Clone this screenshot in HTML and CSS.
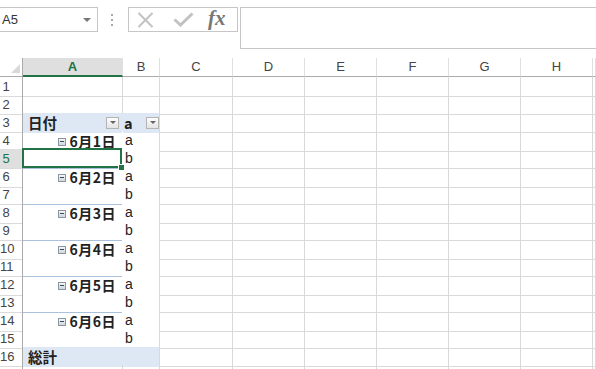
FILE: index.html
```html
<!DOCTYPE html>
<html lang="ja">
<head>
  <meta charset="UTF-8">
  <title>Pivot</title>
  <link rel="stylesheet" href="styles.css">
</head>
<body>

<!-- Formula bar -->
<div class="toolbar">
  <div class="namebox"><span>A5</span><i class="caret"></i></div>
  <div class="grip">
    <svg width="3" height="12" viewBox="0 0 3 12"><rect x="0" y="0" width="2" height="2"/><rect x="0" y="5" width="2" height="2"/><rect x="0" y="10" width="2" height="2"/></svg>
  </div>
  <div class="fbuttons">
    <svg class="ico-x" width="17" height="16" viewBox="0 0 17 16"><path d="M1.5 1 L15.5 15 M15.5 1 L1.5 15"/></svg>
    <svg class="ico-ok" width="21" height="15" viewBox="0 0 21 15"><path d="M1.5 7.5 L7.5 13 L19.5 1.5"/></svg>
    <span class="fx">fx</span>
  </div>
  <div class="finput"></div>
</div>

<!-- Sheet -->
<div class="sheet">
  <div class="row head">
    <div class="corner"><i></i></div>
    <div class="ch on">A</div><div class="ch">B</div><div class="ch">C</div><div class="ch">D</div>
    <div class="ch">E</div><div class="ch">F</div><div class="ch">G</div><div class="ch">H</div><div class="ch"></div>
  </div>

  <div class="row">
    <div class="rh">1</div><div class="c"></div><div class="c"></div>
    <div class="c"></div><div class="c"></div><div class="c"></div><div class="c"></div><div class="c"></div><div class="c"></div><div class="c"></div>
  </div>
  <div class="row">
    <div class="rh">2</div><div class="c"></div><div class="c"></div>
    <div class="c"></div><div class="c"></div><div class="c"></div><div class="c"></div><div class="c"></div><div class="c"></div><div class="c"></div>
  </div>
  <div class="row">
    <div class="rh">3</div>
    <div class="c band bold first">日付<i class="dd"></i></div>
    <div class="c band bold second">a<i class="dd"></i></div>
    <div class="c"></div><div class="c"></div><div class="c"></div><div class="c"></div><div class="c"></div><div class="c"></div><div class="c"></div>
  </div>
  <div class="row">
    <div class="rh">4</div>
    <div class="c pv date"><i class="mbox"></i>6月1日</div>
    <div class="c pvb">a</div>
    <div class="c"></div><div class="c"></div><div class="c"></div><div class="c"></div><div class="c"></div><div class="c"></div><div class="c"></div>
  </div>
  <div class="row">
    <div class="rh on">5</div>
    <div class="c pv gend sel"></div>
    <div class="c pvb">b</div>
    <div class="c"></div><div class="c"></div><div class="c"></div><div class="c"></div><div class="c"></div><div class="c"></div><div class="c"></div>
  </div>
  <div class="row">
    <div class="rh">6</div>
    <div class="c pv date"><i class="mbox"></i>6月2日</div>
    <div class="c pvb">a</div>
    <div class="c"></div><div class="c"></div><div class="c"></div><div class="c"></div><div class="c"></div><div class="c"></div><div class="c"></div>
  </div>
  <div class="row">
    <div class="rh">7</div>
    <div class="c pv gend"></div>
    <div class="c pvb">b</div>
    <div class="c"></div><div class="c"></div><div class="c"></div><div class="c"></div><div class="c"></div><div class="c"></div><div class="c"></div>
  </div>
  <div class="row">
    <div class="rh">8</div>
    <div class="c pv date"><i class="mbox"></i>6月3日</div>
    <div class="c pvb">a</div>
    <div class="c"></div><div class="c"></div><div class="c"></div><div class="c"></div><div class="c"></div><div class="c"></div><div class="c"></div>
  </div>
  <div class="row">
    <div class="rh">9</div>
    <div class="c pv gend"></div>
    <div class="c pvb">b</div>
    <div class="c"></div><div class="c"></div><div class="c"></div><div class="c"></div><div class="c"></div><div class="c"></div><div class="c"></div>
  </div>
  <div class="row">
    <div class="rh">10</div>
    <div class="c pv date"><i class="mbox"></i>6月4日</div>
    <div class="c pvb">a</div>
    <div class="c"></div><div class="c"></div><div class="c"></div><div class="c"></div><div class="c"></div><div class="c"></div><div class="c"></div>
  </div>
  <div class="row">
    <div class="rh">11</div>
    <div class="c pv gend"></div>
    <div class="c pvb">b</div>
    <div class="c"></div><div class="c"></div><div class="c"></div><div class="c"></div><div class="c"></div><div class="c"></div><div class="c"></div>
  </div>
  <div class="row">
    <div class="rh">12</div>
    <div class="c pv date"><i class="mbox"></i>6月5日</div>
    <div class="c pvb">a</div>
    <div class="c"></div><div class="c"></div><div class="c"></div><div class="c"></div><div class="c"></div><div class="c"></div><div class="c"></div>
  </div>
  <div class="row">
    <div class="rh">13</div>
    <div class="c pv gend"></div>
    <div class="c pvb">b</div>
    <div class="c"></div><div class="c"></div><div class="c"></div><div class="c"></div><div class="c"></div><div class="c"></div><div class="c"></div>
  </div>
  <div class="row">
    <div class="rh">14</div>
    <div class="c pv date"><i class="mbox"></i>6月6日</div>
    <div class="c pvb">a</div>
    <div class="c"></div><div class="c"></div><div class="c"></div><div class="c"></div><div class="c"></div><div class="c"></div><div class="c"></div>
  </div>
  <div class="row">
    <div class="rh">15</div>
    <div class="c pv gend"></div>
    <div class="c pvb gend">b</div>
    <div class="c"></div><div class="c"></div><div class="c"></div><div class="c"></div><div class="c"></div><div class="c"></div><div class="c"></div>
  </div>
  <div class="row">
    <div class="rh">16</div>
    <div class="c band bold first">総計</div>
    <div class="c band second"></div>
    <div class="c"></div><div class="c"></div><div class="c"></div><div class="c"></div><div class="c"></div><div class="c"></div><div class="c"></div>
  </div>
  <div class="row">
    <div class="rh"></div><div class="c"></div><div class="c"></div>
    <div class="c"></div><div class="c"></div><div class="c"></div><div class="c"></div><div class="c"></div><div class="c"></div><div class="c"></div>
  </div>
</div>

</body>
</html>
```

FILE: styles.css
```css
body {
  margin: 0;
  width: 596px;
  height: 369px;
  overflow: hidden;
  background: #fff;
  font-family: "Liberation Sans", Arial, sans-serif;
  color: #222;
}

/* Formula bar */
.toolbar {
  height: 58px;
  box-sizing: border-box;
  padding-top: 7px;
  display: flex;
  align-items: flex-start;
}

.namebox {
  margin-left: -1px;
  width: 99px;
  height: 25px;
  box-sizing: border-box;
  border: 1px solid #c6c6c6;
  display: flex;
  align-items: center;
  justify-content: space-between;
  padding: 0 6px 0 2px;
  font-size: 13px;
  color: #333;
}

.caret {
  width: 0;
  height: 0;
  border-left: 4px solid transparent;
  border-right: 4px solid transparent;
  border-top: 4px solid #777;
}

.grip {
  width: 30px;
  height: 25px;
  display: flex;
  align-items: center;
  justify-content: center;
  padding-right: 2px;
  box-sizing: border-box;
}
.grip svg { fill: #a8a8a8; }

.fbuttons {
  width: 110px;
  height: 25px;
  box-sizing: border-box;
  border: 1px solid #c6c6c6;
  display: flex;
  align-items: center;
  padding-left: 8px;
}

.fbuttons svg { fill: none; stroke: #c2c2c2; }
.ico-x { stroke-width: 2; }
.ico-ok { stroke-width: 3; margin-left: 19px; }

.fx {
  margin-left: 14px;
  font-family: "Liberation Serif", "Times New Roman", serif;
  font-style: italic;
  font-weight: bold;
  font-size: 21px;
  color: #777;
  line-height: 1;
  margin-top: -3px;
}

.finput {
  flex: 1;
  height: 42px;
  margin-left: 2px;
  margin-right: -6px;
  box-sizing: border-box;
  border: 1px solid #c6c6c6;
}

/* Sheet grid */
.row {
  display: grid;
  grid-template-columns: 23px 100px 37px 73px 72px 72px 72px 72px 72px 1fr;
  height: 18px;
}
.row > div { box-sizing: border-box; }

.head { height: 19px; }

.corner {
  border-right: 1px solid #ababab;
  border-bottom: 1px solid #ababab;
  display: flex;
  align-items: flex-end;
  justify-content: flex-end;
  padding: 0 2px 3px 0;
}
.corner i {
  width: 0;
  height: 0;
  border-left: 9px solid transparent;
  border-bottom: 9px solid #d9d9d9;
}

.ch {
  border-right: 1px solid #e0e0e0;
  border-bottom: 1px solid #ababab;
  text-align: center;
  font-size: 13px;
  line-height: 18px;
  color: #444;
}
.ch.on {
  background: #dfdfdf;
  color: #217346;
  font-weight: bold;
  border-bottom: 2px solid #217346;
  line-height: 17px;
}

.rh {
  border-right: 1px solid #ababab;
  border-bottom: 1px solid #dadada;
  padding-right: 10px;
  text-align: center;
  font-size: 13px;
  line-height: 19px;
  color: #444;
}
.rh.on {
  background: #dfdfdf;
  color: #217346;
}

.c {
  border-right: 1px solid #d9d9d9;
  border-bottom: 1px solid #d9d9d9;
  font-family: "Liberation Sans", "Noto Sans CJK JP", sans-serif;
  font-size: 14px;
  line-height: 19px;
  white-space: nowrap;
}

/* Pivot table */
.bold {
  font-family: "Noto Sans CJK JP", sans-serif;
  font-weight: bold;
}

.band {
  background: #dde8f4;
  border-bottom-color: #dde8f4;
  display: flex;
  align-items: center;
  justify-content: space-between;
}
.band.first { border-right-color: #dde8f4; padding: 0 3px 0 5px; }
.band.second { padding-left: 1px; border-right-color: #d9d9d9; }
.band.bold { line-height: 18px; font-size: 14.5px; }

.dd {
  width: 13px;
  height: 12px;
  box-sizing: border-box;
  border: 1px solid #b4b4b4;
  background: linear-gradient(#fdfdfd, #e4e4e4);
  display: flex;
  align-items: center;
  justify-content: center;
}
.dd::after {
  content: "";
  border-left: 3px solid transparent;
  border-right: 3px solid transparent;
  border-top: 3px solid #666;
}

.pv {
  border-right-color: #fff;
  border-bottom-color: #fff;
}
.pvb {
  border-bottom-color: #fff;
  padding-left: 2px;
}
.pv.gend, .pvb.gend { border-bottom-color: #a9c1dd; }

.date {
  font-family: "Noto Sans CJK JP", sans-serif;
  font-weight: bold;
  display: flex;
  align-items: center;
  justify-content: flex-end;
  padding: 1px 6px 0 0;
  letter-spacing: 0.5px;
}

.mbox {
  width: 8px;
  height: 8px;
  box-sizing: border-box;
  border: 1px solid #8c96a0;
  background: linear-gradient(#f4f6f8, #cfd6de);
  margin-right: 3px;
  display: flex;
  align-items: center;
  justify-content: center;
}
.mbox::after {
  content: "";
  width: 4px;
  height: 1px;
  background: #3c4a58;
}

/* Active cell */
.sel { position: relative; }
.sel::after {
  content: "";
  position: absolute;
  left: -1px;
  top: -1px;
  width: 100px;
  height: 20px;
  box-sizing: border-box;
  border: 2px solid #217346;
}
.sel::before {
  content: "";
  position: absolute;
  right: -3px;
  bottom: -3px;
  width: 5px;
  height: 5px;
  background: #217346;
  border: 1px solid #fff;
  z-index: 1;
}
```
